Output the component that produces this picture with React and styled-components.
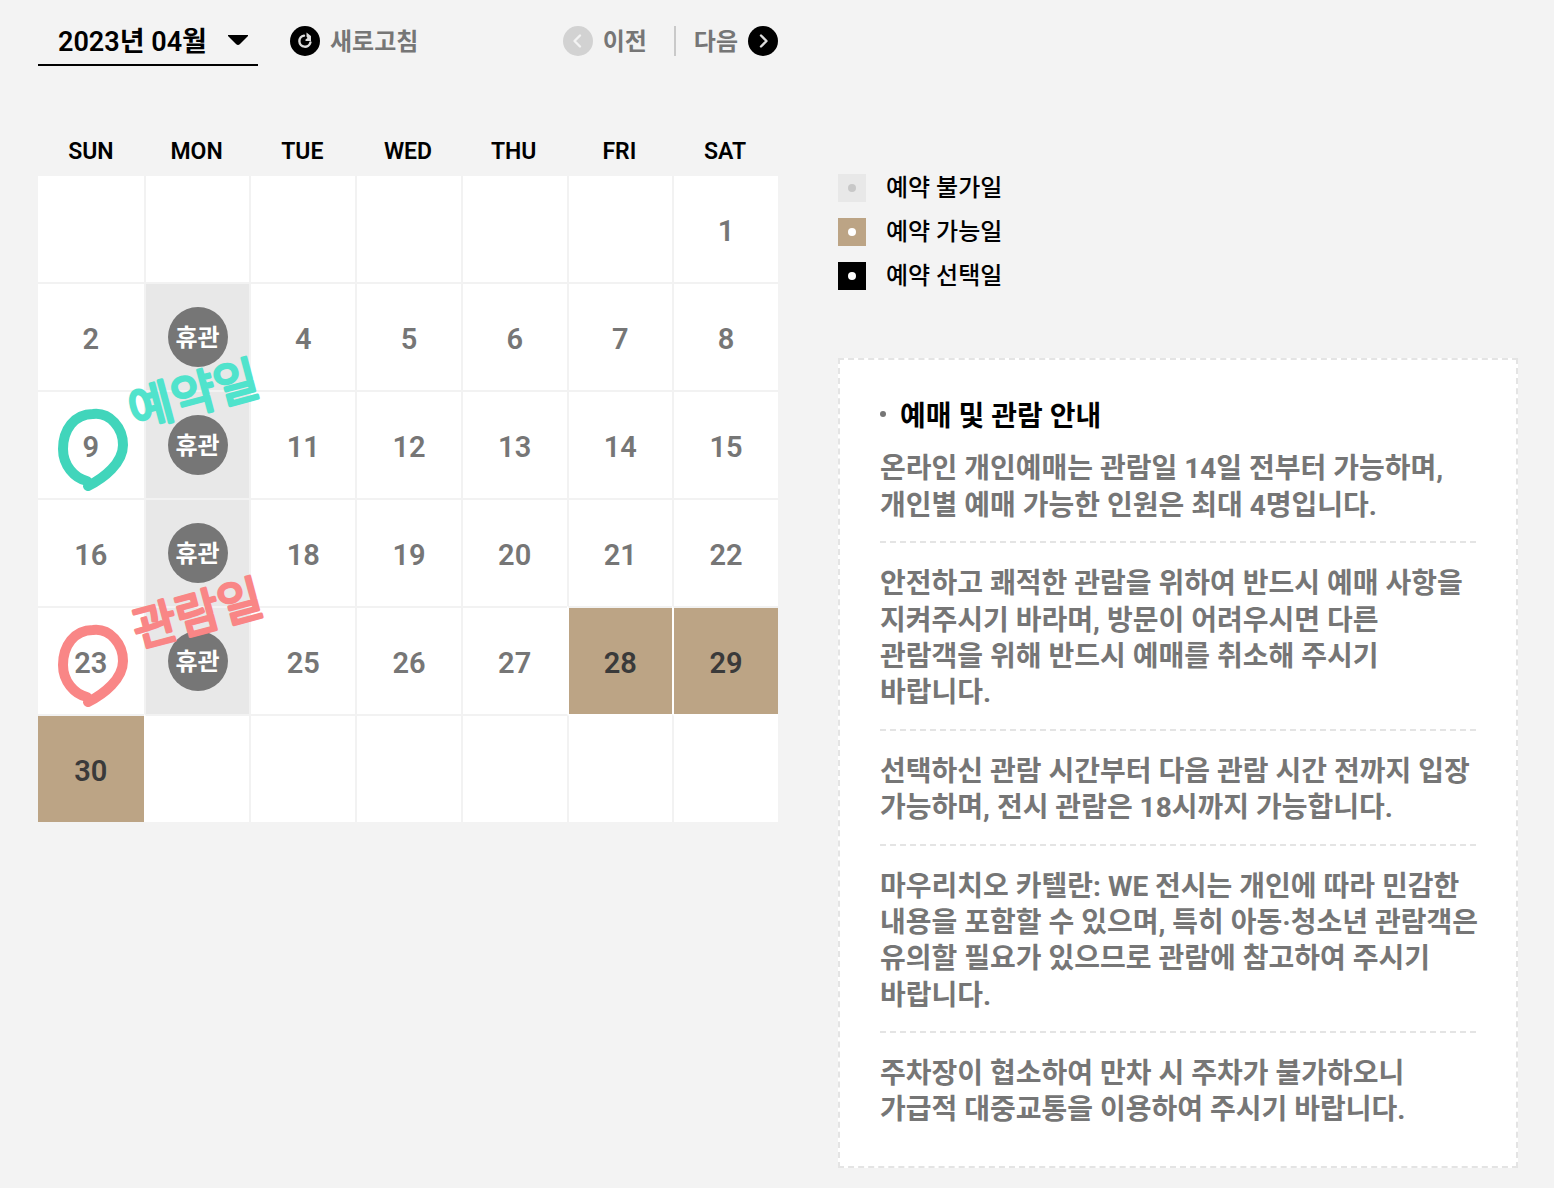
import React from "react";
import styled, { createGlobalStyle } from "styled-components";

const sans = `Roboto, "Noto Sans CJK KR", sans-serif`;

const GlobalStyle = createGlobalStyle`
  *, *::before, *::after { box-sizing: border-box; }
  body { margin: 0; background: #f3f3f3; color: #767676; font-family: ${sans}; word-break: keep-all; }
  button, select { font: inherit; color: inherit; }
`;

const Page = styled.main`
  display: grid;
  grid-template-columns: minmax(0, 740fr) minmax(0, 680fr);
  column-gap: 60px;
  padding: 16px 36px 20px 38px;
`;

const Toolbar = styled.div`
  display: flex;
  align-items: center;
  height: 50px;
`;

const MonthField = styled.label`
  display: flex;
  align-items: center;
  position: relative;
  width: 220px;
  height: 50px;
  border-bottom: 2px solid #000;
`;

const MonthSelect = styled.select`
  appearance: none;
  width: 100%;
  height: 48px;
  padding: 4px 20px 0;
  border: 0;
  background: transparent;
  color: #000;
  font-size: 27px;
  font-weight: 600;
  cursor: pointer;
`;

const Caret = styled.svg`
  position: absolute;
  right: 10px;
  top: 18px;
  pointer-events: none;
`;

const ToolButton = styled.button`
  display: flex;
  align-items: center;
  gap: 10px;
  padding: 0;
  border: 0;
  background: none;
  font-size: 24px;
  font-weight: 700;
  line-height: 36px;
  white-space: nowrap;
  cursor: pointer;
`;

const ButtonText = styled.span`
  padding-top: 2px;
`;

const RefreshButton = styled(ToolButton)`
  margin-left: 32px;
`;

const Pager = styled.div`
  display: flex;
  align-items: center;
  margin-left: auto;
`;

const Divider = styled.span`
  width: 2px;
  height: 30px;
  margin: 0 18px 0 27px;
  background: #c9c9c9;
`;

const Calendar = styled.table`
  width: 100%;
  margin-top: 60px;
  table-layout: fixed;
  border-collapse: separate;
  border-spacing: 0;
`;

const Weekday = styled.th`
  height: 50px;
  padding: 0;
  color: #000;
  font-size: 23px;
  font-weight: 600;
`;

const DayCell = styled.td`
  position: relative;
  height: ${(p) => (p.$first ? 106 : 108)}px;
  padding: 0;
  border: 0 solid #f2f2f2;
  border-top-width: ${(p) => (p.$first ? 0 : 2)}px;
  border-left-width: ${(p) => (p.$start ? 0 : 2)}px;
  border-left-color: ${(p) => (p.$whiteLeft ? "#fff" : "#f2f2f2")};
  border-top-color: ${(p) => (p.$whiteTop ? "#fff" : "#f2f2f2")};
  background: ${(p) => (p.$kind === "open" ? "#bca485" : p.$kind === "closed" ? "#e8e8e8" : "#fff")};
  text-align: center;
`;

const DayButton = styled.button`
  display: block;
  width: 100%;
  height: 106px;
  padding: ${(p) => (p.$closed ? 0 : 3)}px 0 0;
  border: 0;
  background: none;
  color: ${(p) => (p.$open ? "#3a3a3a" : "#767676")};
  font-size: 29px;
  font-weight: 600;
  cursor: ${(p) => (p.$open ? "pointer" : "default")};
`;

const ClosedBadge = styled.span`
  display: flex;
  align-items: center;
  justify-content: center;
  width: 60px;
  height: 60px;
  margin: 0 auto;
  padding-bottom: 3px;
  border-radius: 50%;
  background: #767676;
  color: #fff;
  font-size: 24px;
  font-weight: 700;
`;

const Marker = styled.svg`
  position: absolute;
  z-index: 1;
  left: 18px;
  top: 16px;
  overflow: visible;
  pointer-events: none;
`;

const MarkerLabel = styled.text`
  font-family: "Noto Sans CJK KR", sans-serif;
  font-size: 48px;
  font-weight: 400;
  text-anchor: middle;
  stroke-width: 3px;
  stroke-linejoin: round;
`;

const Legend = styled.ul`
  display: grid;
  gap: 8px;
  margin: 154px 0 0;
  padding: 0;
  list-style: none;
`;

const LegendItem = styled.li`
  display: flex;
  align-items: center;
  gap: 20px;
  color: #000;
  font-size: 24px;
  font-weight: 500;
  line-height: 36px;
`;

const Swatch = styled.span`
  display: flex;
  align-items: center;
  justify-content: center;
  width: 28px;
  height: 28px;
  background: ${(p) => p.$color};
  &::after {
    content: "";
    width: 8px;
    height: 8px;
    border-radius: 50%;
    background: ${(p) => p.$dot};
  }
`;

const Notice = styled.section`
  margin-top: 64px;
  padding: 39px 40px 37px;
  border: 2px dashed #e4e4e4;
  background: #fff;
  font-size: 28px;
  font-weight: 700;
  line-height: 1.3;
`;

const NoticeTitle = styled.h2`
  display: flex;
  gap: 14px;
  margin: 0 0 16px;
  color: #000;
  font-size: 28px;
  font-weight: 700;
  &::before {
    content: "";
    width: 6px;
    height: 6px;
    margin-top: 12px;
    border-radius: 50%;
    background: #767676;
  }
`;

const NoticeText = styled.p`
  margin: 0;
  padding-bottom: 17px;
  & + & {
    padding-top: 23px;
    border-top: 2px dashed #e4e4e4;
  }
  &:last-child { padding-bottom: 0; }
  @media (min-width: 1500px) { white-space: nowrap; }
`;

const weekdays = ["SUN", "MON", "TUE", "WED", "THU", "FRI", "SAT"];
const openDays = [28, 29, 30];
const marks = {
  9: { color: "#41d5bb", text: "#50e3cc", label: "예약일", x: 142, y: 3 },
  23: { color: "#f98686", text: "#f98686", label: "관람일", x: 146, y: 6 },
};

const legend = [
  { label: "예약 불가일", color: "#e8e8e8", dot: "#c8c8c8" },
  { label: "예약 가능일", color: "#bca485", dot: "#fff" },
  { label: "예약 선택일", color: "#000", dot: "#fff" },
];

const notices = [
  ["온라인 개인예매는 관람일 14일 전부터 가능하며,", "개인별 예매 가능한 인원은 최대 4명입니다."],
  ["안전하고 쾌적한 관람을 위하여 반드시 예매 사항을", "지켜주시기 바라며, 방문이 어려우시면 다른", "관람객을 위해 반드시 예매를 취소해 주시기", "바랍니다."],
  ["선택하신 관람 시간부터 다음 관람 시간 전까지 입장", "가능하며, 전시 관람은 18시까지 가능합니다."],
  ["마우리치오 카텔란: WE 전시는 개인에 따라 민감한", "내용을 포함할 수 있으며, 특히 아동·청소년 관람객은", "유의할 필요가 있으므로 관람에 참고하여 주시기", "바랍니다."],
  ["주차장이 협소하여 만차 시 주차가 불가하오니", "가급적 대중교통을 이용하여 주시기 바랍니다."],
];

const dayAt = (week, col) => {
  const day = week * 7 + col - 5;
  return day >= 1 && day <= 30 ? day : null;
};
const isOpen = (day) => openDays.includes(day);

function RoundIcon({ fill, stroke, d, head }) {
  return (
    <svg width="30" height="30" viewBox="0 0 30 30" aria-hidden="true">
      <circle cx="15" cy="15" r="15" fill={fill} />
      <path d={d} fill="none" stroke={stroke} strokeWidth="2.4" strokeLinecap="round" strokeLinejoin="round" />
      {head && <path d={head} fill={stroke} />}
    </svg>
  );
}

function Day({ week, col }) {
  const day = dayAt(week, col);
  const open = isOpen(day);
  const closed = day !== null && col === 1;
  const mark = marks[day];
  return (
    <DayCell
      $first={week === 0}
      $start={col === 0}
      $kind={open ? "open" : closed ? "closed" : "plain"}
      $whiteLeft={open || (col > 0 && isOpen(dayAt(week, col - 1)))}
      $whiteTop={week > 0 && isOpen(dayAt(week - 1, col))}
    >
      {day !== null && (
        <DayButton type="button" $open={open} $closed={closed} disabled={!open}>
          {closed ? <ClosedBadge>휴관</ClosedBadge> : day}
        </DayButton>
      )}
      {mark && (
        <Marker width="72" height="84" viewBox="0 0 72 84">
          <path
            d="M31 73C18 70 7 57 7 41C7 22 18 6 37 6C54 4 67 20 67 37C67 55 48 70 32 78"
            fill="none" stroke={mark.color} strokeWidth="10" strokeLinecap="round" strokeLinejoin="round"
          />
          <MarkerLabel x={mark.x} y={mark.y} fill={mark.text} stroke={mark.text} transform={`rotate(-15 ${mark.x} ${mark.y})`}>
            {mark.label}
          </MarkerLabel>
        </Marker>
      )}
    </DayCell>
  );
}

export default function App() {
  return (
    <>
      <GlobalStyle />
      <Page>
        <div>
          <Toolbar>
            <MonthField>
              <MonthSelect aria-label="월 선택" defaultValue="2023-04">
                <option value="2023-04">2023년 04월</option>
              </MonthSelect>
              <Caret width="20" height="12" viewBox="0 0 20 12" aria-hidden="true">
                <path d="M0 1H20V2L12 10Q10 12 8 10L0 2Z" fill="#000" />
              </Caret>
            </MonthField>
            <RefreshButton type="button">
              <RoundIcon fill="#000" stroke="#ddd" d="M14 9.6A5.6 5.6 0 1 0 20.4 16.5" head="M16.5 6.5L21 10V15H15.5V13.5L17.5 12L16.5 10.5Z" />
              <ButtonText>새로고침</ButtonText>
            </RefreshButton>
            <Pager>
              <ToolButton type="button">
                <RoundIcon fill="#d2d2d2" stroke="#f3f3f3" d="M17 9.5L11.5 15L17 20.5" />
                <ButtonText>이전</ButtonText>
              </ToolButton>
              <Divider />
              <ToolButton type="button">
                <ButtonText>다음</ButtonText>
                <RoundIcon fill="#000" stroke="#ddd" d="M13 9.5L18.5 15L13 20.5" />
              </ToolButton>
            </Pager>
          </Toolbar>
          <Calendar>
            <thead>
              <tr>{weekdays.map((name) => <Weekday key={name} scope="col">{name}</Weekday>)}</tr>
            </thead>
            <tbody>
              {[0, 1, 2, 3, 4, 5].map((week) => (
                <tr key={week}>
                  {weekdays.map((name, col) => <Day key={name} week={week} col={col} />)}
                </tr>
              ))}
            </tbody>
          </Calendar>
        </div>
        <aside>
          <Legend>
            {legend.map((item) => (
              <LegendItem key={item.label}>
                <Swatch $color={item.color} $dot={item.dot} />
                {item.label}
              </LegendItem>
            ))}
          </Legend>
          <Notice>
            <NoticeTitle>예매 및 관람 안내</NoticeTitle>
            {notices.map((lines) => (
              <NoticeText key={lines[0]}>
                {lines.map((line, i) => (
                  <React.Fragment key={line}>
                    {i > 0 && <br />}
                    {line}
                  </React.Fragment>
                ))}
              </NoticeText>
            ))}
          </Notice>
        </aside>
      </Page>
    </>
  );
}
